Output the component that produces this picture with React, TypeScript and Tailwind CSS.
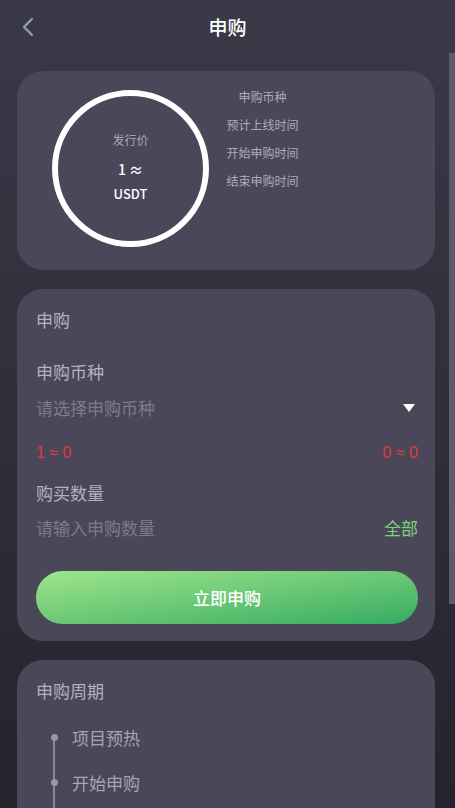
import React from "react";

const font = { fontFamily: '"Noto Sans CJK SC", "Noto Sans", sans-serif' };

function Timeline({ label, first, tail }: { label: string; first?: boolean; tail?: boolean }) {
  return (
    <div className={`flex items-start ${tail ? "h-[60px]" : "h-[45px]"}`}>
      <div className="flex h-full w-[36px] flex-col items-center">
        <div className={`h-[8px] w-[2px] ${first ? "" : "bg-[#8c8a96]"}`} />
        <div className="h-[7px] w-[7px] rounded-full bg-[#9a98a3]" />
        <div className="w-[2px] flex-1 bg-[#8c8a96]" />
      </div>
      <div className="text-[17px] leading-[24px] text-[#a7a5b1]">{label}</div>
    </div>
  );
}

export default function App() {
  return (
    <div
      className="flex h-[808px] w-[455px] flex-col overflow-hidden bg-gradient-to-b from-[#3b3948] to-[#25242d]"
      style={font}
    >
      {/* header */}
      <div className="relative flex h-[53px] shrink-0 items-center justify-center">
        <div className="absolute left-[20px] top-[17px]">
          <svg width="16" height="20" viewBox="0 0 16 20">
            <polyline points="12,2 4,10 12,18" fill="none" stroke="#8d9cb4" strokeWidth="2.4" strokeLinecap="round" strokeLinejoin="round" />
          </svg>
        </div>
        <div className="pt-[2px] text-[19px] font-medium text-white">申购</div>
      </div>

      <div className="flex min-h-0 flex-1">
        <div className="flex w-[449px] flex-col gap-[19px] pl-[17px] pt-[18px]">
          {/* card 1 */}
          <div className="flex h-[199px] w-[418px] shrink-0 rounded-[26px] bg-[#4a4858] pl-[35px] pt-[19px]">
            <div className="flex h-[157px] w-[157px] flex-col items-center justify-center rounded-full border-[6px] border-white">
              <div className="mt-[-2px] text-[12px] leading-[16px] text-[#a9a7b4]">发行价</div>
              <div className="mt-[12px] text-[14px] font-medium leading-[18px] text-white">1 ≈</div>
              <div className="mt-[7px] text-[13px] font-medium leading-[18px] text-white">USDT</div>
            </div>
            <div className="ml-[17px] mt-[-7px] flex w-[73px] flex-col items-center text-[12px] leading-[28px] text-[#aeacb9]">
              <div>申购币种</div>
              <div>预计上线时间</div>
              <div>开始申购时间</div>
              <div>结束申购时间</div>
            </div>
          </div>

          {/* card 2 */}
          <div className="flex w-[418px] shrink-0 flex-col rounded-[26px] bg-[#4a4858] pb-[17px] pl-[19px] pr-[17px] pt-[19px]">
            <div className="text-[17px] leading-[24px] text-[#b4b2bf]">申购</div>
            <div className="mt-[28px] text-[17px] leading-[24px] text-[#b4b2bf]">申购币种</div>
            <div className="mt-[12px] flex items-center justify-between">
              <div className="text-[17px] leading-[24px] text-[#7d7b88]">请选择申购币种</div>
              <svg width="12" height="8" viewBox="0 0 12 8" className="mr-[3px]">
                <polygon points="0,0 12,0 6,8" fill="#ffffff" />
              </svg>
            </div>
            <div className="mt-[21px] flex items-center justify-between text-[16px] leading-[24px] text-[#e8353b]" style={{ fontFamily: '"Liberation Sans", "Noto Sans CJK SC", sans-serif' }}>
              <div>1 ≈ 0</div>
              <div>0 ≈ 0</div>
            </div>
            <div className="mt-[16px] text-[17px] leading-[24px] text-[#b4b2bf]">购买数量</div>
            <div className="mt-[11px] flex items-center justify-between">
              <div className="text-[17px] leading-[24px] text-[#7d7b88]">请输入申购数量</div>
              <div className="text-[17px] leading-[24px] text-[#7fd27d]">全部</div>
            </div>
            <div className="mt-[31px] flex h-[53px] items-center justify-center rounded-full bg-gradient-to-br from-[#9de68b] to-[#2fac62] text-[17px] font-medium text-white">
              立即申购
            </div>
          </div>

          {/* card 3 */}
          <div className="flex w-[418px] shrink-0 flex-col rounded-[26px] bg-[#4a4858] px-[19px] pb-[17px] pt-[19px]">
            <div className="text-[17px] leading-[24px] text-[#b4b2bf]">申购周期</div>
            <div className="mt-[23px] flex flex-col">
              <Timeline label="项目预热" first />
              <Timeline label="开始申购" tail />
            </div>
          </div>
        </div>
        <div className="w-[6px]">
          <div className="h-[551px] w-[6px] bg-[#5c5b67]" />
        </div>
      </div>
    </div>
  );
}
